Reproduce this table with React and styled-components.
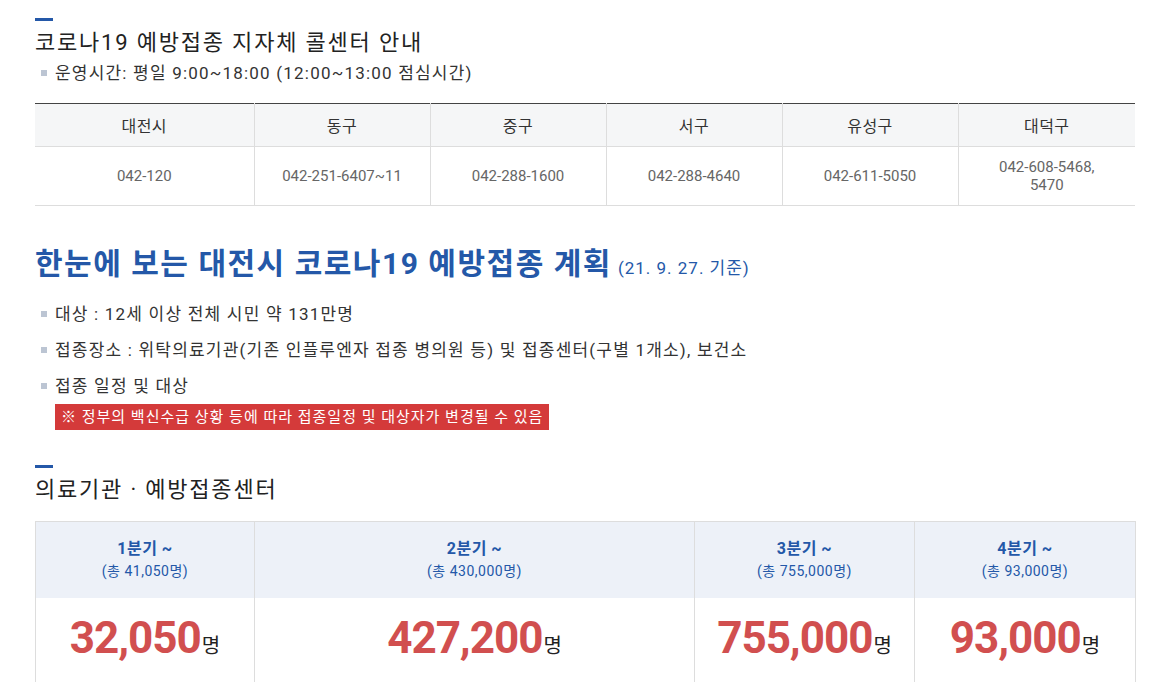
import React from 'react'
import styled, { createGlobalStyle } from 'styled-components'

const GlobalStyle = createGlobalStyle`
  body {
    margin: 0;
    background: #fff;
    font-family: Roboto, 'Noto Sans CJK KR', sans-serif;
    color: #333;
  }
`

const Page = styled.div`
  width: 1100px;
  padding: 18px 0 0 35px;
`

const Bar = styled.div`
  width: 18px;
  height: 3px;
  background: #2458a8;
`

const SubTitle = styled.h3`
  margin: 6px 0 0;
  font-size: 22px;
  line-height: 32px;
  font-weight: 400;
  color: #222;
  letter-spacing: 1.8px;
`

const BulletList = styled.ul`
  list-style: none;
  margin: ${p => p.$mt || 0}px 0 0;
  padding: 0;
`

const Bullet = styled.li`
  position: relative;
  padding-left: 20px;
  font-size: 17px;
  line-height: 24px;
  color: #333;
  letter-spacing: 1.2px;
  margin-bottom: ${p => p.$gap || 0}px;
  &::before {
    content: '';
    position: absolute;
    left: 6px;
    top: 9px;
    width: 6px;
    height: 6px;
    background: #bcc5d3;
  }
`

const CallTable = styled.table`
  width: 100%;
  margin-top: 18px;
  border-collapse: collapse;
  border-top: 1px solid #444;
  table-layout: fixed;
  font-size: 15px;
`

const Th = styled.th`
  height: 40px;
  background: #f5f6f7;
  font-weight: 400;
  font-size: 16px;
  color: #333;
  letter-spacing: 0.5px;
  border-bottom: 1px solid #ddd;
  border-left: 1px solid #ddd;
  &:first-child { border-left: none; }
`

const Td = styled.td`
  height: 56px;
  text-align: center;
  color: #666;
  line-height: 18px;
  border-bottom: 1px solid #ddd;
  border-left: 1px solid #ddd;
  &:first-child { border-left: none; }
`

const MainTitle = styled.h2`
  margin: 38px 0 0;
  font-size: 30px;
  line-height: 40px;
  font-weight: 700;
  color: #2458a8;
  letter-spacing: 1.5px;
  small {
    font-size: 17px;
    font-weight: 400;
    margin-left: 6px;
    letter-spacing: 1px;
  }
`

const Notice = styled.div`
  display: inline-block;
  margin: 6px 0 0 20px;
  padding: 0 6px;
  height: 26px;
  line-height: 26px;
  background: #d43a3a;
  color: #fff;
  font-size: 15px;
  letter-spacing: 1px;
`

const Section = styled.div`
  margin-top: 35px;
`

const PlanTable = styled.table`
  width: 100%;
  margin-top: 15px;
  border-collapse: collapse;
  table-layout: fixed;
  border: 1px solid #ddd;
`

const QTh = styled.th`
  height: 74px;
  background: #edf1f8;
  border-left: 1px solid #ddd;
  font-weight: 400;
  color: #2458a8;
  line-height: 23px;
  letter-spacing: 0.5px;
  b {
    display: block;
    font-size: 16px;
    font-weight: 700;
  }
  span {
    display: block;
    font-size: 14px;
  }
`

const QTd = styled.td`
  height: 84px;
  border-left: 1px solid #ddd;
  text-align: center;
  vertical-align: top;
  padding-top: 14px;
  line-height: 52px;
`

const Big = styled.strong`
  font-family: Roboto, sans-serif;
  font-size: 44px;
  font-weight: 700;
  color: #d14f4f;
  letter-spacing: -1px;
`

const Unit = styled.span`
  font-size: 20px;
  color: #222;
  margin-left: 1px;
`

const calls = [
  ['대전시', '042-120'],
  ['동구', '042-251-6407~11'],
  ['중구', '042-288-1600'],
  ['서구', '042-288-4640'],
  ['유성구', '042-611-5050'],
  ['대덕구', '042-608-5468,\n5470']
]

const quarters = [
  { q: '1분기 ~', total: '(총 41,050명)', num: '32,050', w: 219 },
  { q: '2분기 ~', total: '(총 430,000명)', num: '427,200', w: 440 },
  { q: '3분기 ~', total: '(총 755,000명)', num: '755,000', w: 220 },
  { q: '4분기 ~', total: '(총 93,000명)', num: '93,000', w: 221 }
]

const App = () => {
  return (
    <Page>
      <GlobalStyle />
      <Bar />
      <SubTitle>코로나19 예방접종 지자체 콜센터 안내</SubTitle>
      <BulletList $mt={2}>
        <Bullet>운영시간: 평일 9:00~18:00 (12:00~13:00 점심시간)</Bullet>
      </BulletList>
      <CallTable>
        <colgroup>
          <col style={{ width: 219 }} />
          <col style={{ width: 176 }} />
          <col style={{ width: 176 }} />
          <col style={{ width: 176 }} />
          <col style={{ width: 176 }} />
          <col style={{ width: 177 }} />
        </colgroup>
        <thead>
          <tr>
            {calls.map(c => (
              <Th key={c[0]}>{c[0]}</Th>
            ))}
          </tr>
        </thead>
        <tbody>
          <tr>
            {calls.map(c => (
              <Td key={c[0]}>
                {c[1].split('\n').map((l, i) => (
                  <div key={i}>{l}</div>
                ))}
              </Td>
            ))}
          </tr>
        </tbody>
      </CallTable>

      <MainTitle>
        한눈에 보는 대전시 코로나19 예방접종 계획<small>(21. 9. 27. 기준)</small>
      </MainTitle>
      <BulletList $mt={14}>
        <Bullet $gap={12}>대상 : 12세 이상 전체 시민 약 131만명</Bullet>
        <Bullet $gap={12}>
          접종장소 : 위탁의료기관(기존 인플루엔자 접종 병의원 등) 및 접종센터(구별 1개소), 보건소
        </Bullet>
        <Bullet>접종 일정 및 대상</Bullet>
      </BulletList>
      <Notice>※ 정부의 백신수급 상황 등에 따라 접종일정 및 대상자가 변경될 수 있음</Notice>

      <Section>
        <Bar />
        <SubTitle>의료기관 · 예방접종센터</SubTitle>
        <PlanTable>
          <colgroup>
            {quarters.map(q => (
              <col key={q.q} style={{ width: q.w }} />
            ))}
          </colgroup>
          <thead>
            <tr>
              {quarters.map(q => (
                <QTh key={q.q}>
                  <b>{q.q}</b>
                  <span>{q.total}</span>
                </QTh>
              ))}
            </tr>
          </thead>
          <tbody>
            <tr>
              {quarters.map(q => (
                <QTd key={q.q}>
                  <Big>{q.num}</Big>
                  <Unit>명</Unit>
                </QTd>
              ))}
            </tr>
          </tbody>
        </PlanTable>
      </Section>
    </Page>
  )
}

export default App
